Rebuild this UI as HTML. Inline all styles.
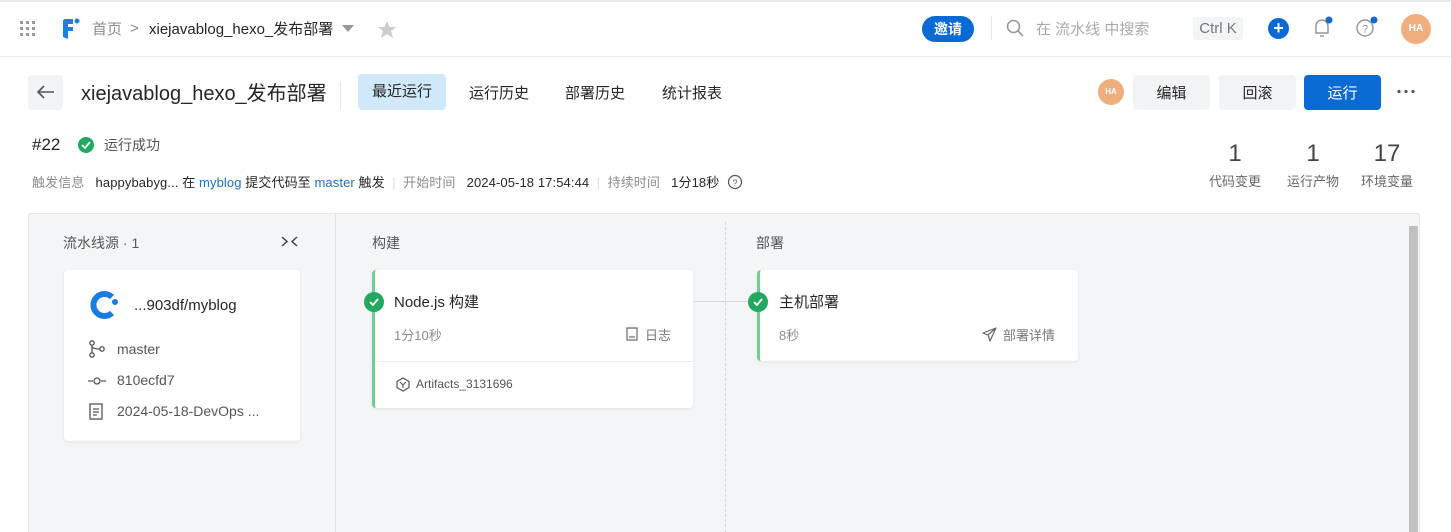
<!DOCTYPE html>
<html><head><meta charset="utf-8">
<style>
*{box-sizing:border-box;margin:0;padding:0}
html,body{width:1451px;height:532px;overflow:hidden}
body{background:#fff;font-family:"Liberation Sans","Noto Sans CJK SC",sans-serif;color:#262626;position:relative}
.a{position:absolute;white-space:nowrap}
.g{color:#8c8c8c}
.blue{color:#1b6fc6}
.btn{position:absolute;height:35px;border-radius:4px;background:#f2f3f5;font-size:15px;display:flex;align-items:center;justify-content:center;color:#262626}
.card{position:absolute;background:#fff;border-radius:4px;box-shadow:0 1px 3px rgba(0,0,0,.08)}
.chk{position:absolute;width:20px;height:20px;border-radius:50%;background:#22a860;display:flex;align-items:center;justify-content:center}
</style></head><body>
<div class="a" style="left:0;top:0;width:1451px;height:2px;background:#e8e8e8"></div>
<svg class="a" style="left:20px;top:21px" width="16" height="16"><g fill="#999"><rect x="0" y="0" width="3" height="3"/><rect x="6" y="0" width="3" height="3"/><rect x="12" y="0" width="3" height="3"/><rect x="0" y="6" width="3" height="3"/><rect x="6" y="6" width="3" height="3"/><rect x="12" y="6" width="3" height="3"/><rect x="0" y="12" width="3" height="3"/><rect x="6" y="12" width="3" height="3"/><rect x="12" y="12" width="3" height="3"/></g></svg>
<svg class="a" style="left:60px;top:17px" width="20" height="24"><path d="M3 4 Q3 2 6 2 H13 V7 H8 V10 H13 V14 H8 V22 L3 20 Z" fill="#1f7ee0"/><circle cx="17" cy="4" r="2.5" fill="#1f7ee0"/></svg>
<div class="a g" style="left:92px;top:18px;font-size:15px">首页</div>
<div class="a g" style="left:130px;top:20px;font-size:15px">&gt;</div>
<div class="a" style="left:149px;top:18px;font-size:15px">xiejavablog_hexo_发布部署</div>
<svg class="a" style="left:342px;top:25px" width="12" height="8"><path d="M0 0H12L6 7Z" fill="#999"/></svg>
<svg class="a" style="left:377px;top:20px" width="20" height="20"><path d="M10 1L12.6 7H19L14 11L16 18L10 14L4 18L6 11L1 7H7.4Z" fill="#ccc"/></svg>
<div class="a" style="left:922px;top:16px;width:52px;height:26px;border-radius:13px;background:#0a6ad4;color:#fff;font-size:14px;font-weight:bold;display:flex;align-items:center;justify-content:center">邀请</div>
<div class="a" style="left:991px;top:16px;width:1px;height:24px;background:#e5e5e5"></div>
<svg class="a" style="left:1006px;top:19px" width="18" height="18"><circle cx="7.5" cy="7.5" r="6" fill="none" stroke="#999" stroke-width="1.6"/><path d="M12 12L17 17" stroke="#999" stroke-width="1.6"/></svg>
<div class="a" style="left:1036px;top:18px;font-size:15px;color:#aaa">在 流水线 中搜索</div>
<div class="a" style="left:1193px;top:17px;width:50px;height:23px;background:#f3f4f6;border-radius:3px;font-size:15px;color:#777;text-align:center;line-height:24px">Ctrl K</div>
<div class="a" style="left:1268px;top:18px;width:21px;height:21px;border-radius:50%;background:#0a6ad4;color:#fff;font-size:18px;line-height:20px;text-align:center;font-weight:bold">+</div>
<svg class="a" style="left:1312px;top:16px" width="22" height="24"><path d="M4 17V10a6 6 0 0 1 12 0v7H3M8 20h4" fill="none" stroke="#999" stroke-width="1.5"/><circle cx="17" cy="4" r="3.5" fill="#0a6ad4"/></svg>
<svg class="a" style="left:1355px;top:16px" width="26" height="24"><circle cx="10" cy="12" r="8" fill="none" stroke="#999" stroke-width="1.5"/><text x="10" y="16.5" font-size="11" text-anchor="middle" fill="#999" font-family="Liberation Sans">?</text><circle cx="19" cy="4" r="3.5" fill="#0a6ad4"/></svg>
<div class="a" style="left:1401px;top:14px;width:30px;height:30px;border-radius:50%;background:#eeae7e;color:#fff;font-size:10px;font-weight:bold;text-align:center;line-height:30px">HA</div>
<div class="a" style="left:0;top:56px;width:1451px;height:1px;background:#ececec"></div>
<div class="a" style="left:28px;top:75px;width:35px;height:35px;background:#f2f3f5;border-radius:4px"></div>
<svg class="a" style="left:37px;top:85px" width="18" height="14"><path d="M17 7H2M7 1L1 7L7 13" fill="none" stroke="#555" stroke-width="1.6"/></svg>
<div class="a" style="left:81px;top:77px;font-size:20px">xiejavablog_hexo_发布部署</div>
<div class="a" style="left:340px;top:81px;width:1px;height:28px;background:#e5e5e5"></div>
<div class="a" style="left:358px;top:74px;width:88px;height:36px;background:#cfe8fc;border-radius:4px;font-size:15px;text-align:center;line-height:36px">最近运行</div>
<div class="a" style="left:469px;top:82px;font-size:15px">运行历史</div>
<div class="a" style="left:565px;top:82px;font-size:15px">部署历史</div>
<div class="a" style="left:662px;top:82px;font-size:15px">统计报表</div>
<div class="a" style="left:1098px;top:79px;width:26px;height:26px;border-radius:50%;background:#eeae7e;color:#fff;font-size:8px;font-weight:bold;text-align:center;line-height:26px">HA</div>
<div class="btn" style="left:1133px;top:75px;width:77px">编辑</div>
<div class="btn" style="left:1219px;top:75px;width:77px">回滚</div>
<div class="btn" style="left:1304px;top:75px;width:77px;background:#0a6ad4;color:#fff">运行</div>
<svg class="a" style="left:1397px;top:89px" width="18" height="5"><circle cx="2" cy="2.5" r="1.6" fill="#555"/><circle cx="9" cy="2.5" r="1.6" fill="#555"/><circle cx="16" cy="2.5" r="1.6" fill="#555"/></svg>
<div class="a" style="left:32px;top:135px;font-size:17px">#22</div>
<div class="chk" style="left:78px;top:137px;width:16px;height:16px"><svg width="10" height="8"><path d="M1 4L4 7L9 1" fill="none" stroke="#fff" stroke-width="1.8"/></svg></div>
<div class="a" style="left:104px;top:135px;font-size:14px;color:#555">运行成功</div>
<div class="a" style="left:32px;top:172px;font-size:13px;letter-spacing:0.1px"><span class="g">触发信息</span>&nbsp;&nbsp; happybabyg... 在 <span class="blue">myblog</span> 提交代码至 <span class="blue">master</span> 触发 <span style="color:#ddd">&nbsp;|&nbsp;</span> <span class="g">开始时间</span>&nbsp;&nbsp; 2024-05-18 17:54:44 <span style="color:#ddd">&nbsp;|&nbsp;</span> <span class="g">持续时间</span>&nbsp;&nbsp; 1分18秒</div>
<svg class="a" style="left:727px;top:174px" width="16" height="16"><circle cx="8" cy="8" r="6.5" fill="none" stroke="#555" stroke-width="1.2"/><text x="8" y="12" font-size="9" text-anchor="middle" fill="#555" font-family="Liberation Sans">?</text></svg>
<div class="a" style="left:1210px;top:140px;width:50px;text-align:center;font-size:24px;color:#444">1</div>
<div class="a" style="left:1203px;top:171px;width:64px;text-align:center;font-size:13px;color:#666">代码变更</div>
<div class="a" style="left:1288px;top:140px;width:50px;text-align:center;font-size:24px;color:#444">1</div>
<div class="a" style="left:1281px;top:171px;width:64px;text-align:center;font-size:13px;color:#666">运行产物</div>
<div class="a" style="left:1362px;top:140px;width:50px;text-align:center;font-size:24px;color:#444">17</div>
<div class="a" style="left:1355px;top:171px;width:64px;text-align:center;font-size:13px;color:#666">环境变量</div>
<div class="a" style="left:28px;top:213px;width:1392px;height:330px;background:#f3f5f7;border:1px solid #e6e8eb;border-radius:3px"></div>
<div class="a" style="left:335px;top:214px;width:1px;height:318px;background:#e0e0e0"></div>
<div class="a" style="left:725px;top:222px;width:0;height:310px;border-left:1px dashed #d6d6d6"></div>
<div class="a" style="left:1409px;top:226px;width:9px;height:306px;background:#c1c1c1"></div>
<div class="a" style="left:63px;top:233px;font-size:14px;color:#555">流水线源 · 1</div>
<svg class="a" style="left:281px;top:236px" width="17" height="11"><path d="M1 1L6 5.5L1 10M16 1L11 5.5L16 10" fill="none" stroke="#444" stroke-width="1.5"/></svg>
<div class="a" style="left:372px;top:233px;font-size:14px;color:#555">构建</div>
<div class="a" style="left:756px;top:233px;font-size:14px;color:#555">部署</div>
<div class="card" style="left:64px;top:270px;width:236px;height:171px"></div>
<svg class="a" style="left:90px;top:290px" width="30" height="30"><path d="M22 7A11 11 0 1 0 22 23" fill="none" stroke="#1a7be0" stroke-width="6"/><circle cx="25" cy="12" r="3" fill="#1a7be0"/></svg>
<div class="a" style="left:134px;top:297px;font-size:15px">...903df/myblog</div>
<svg class="a" style="left:89px;top:340px" width="16" height="18"><circle cx="3" cy="3" r="2.2" fill="none" stroke="#555" stroke-width="1.3"/><circle cx="3" cy="15" r="2.2" fill="none" stroke="#555" stroke-width="1.3"/><circle cx="13" cy="9" r="2.2" fill="none" stroke="#555" stroke-width="1.3"/><path d="M3 5V13M3 6Q3 9 11 9" fill="none" stroke="#555" stroke-width="1.3"/></svg>
<div class="a" style="left:117px;top:341px;font-size:14px;color:#555">master</div>
<svg class="a" style="left:88px;top:376px" width="18" height="10"><path d="M0 5H5M13 5H18" stroke="#555" stroke-width="1.3"/><circle cx="9" cy="5" r="3" fill="none" stroke="#555" stroke-width="1.3"/></svg>
<div class="a" style="left:117px;top:372px;font-size:14px;color:#555">810ecfd7</div>
<svg class="a" style="left:89px;top:403px" width="14" height="17"><rect x="1" y="1" width="12" height="15" fill="none" stroke="#555" stroke-width="1.3"/><path d="M4 6H10M4 9H10M4 12H8" stroke="#555" stroke-width="1.2"/></svg>
<div class="a" style="left:117px;top:403px;font-size:14px;color:#555">2024-05-18-DevOps ...</div>
<div class="card" style="left:372px;top:270px;width:321px;height:138px;border-left:3px solid #6fcf8e"></div>
<div class="a" style="left:375px;top:361px;width:318px;height:1px;background:#ececec"></div>
<div class="chk" style="left:364px;top:292px"><svg width="10" height="8"><path d="M1 4L4 7L9 1" fill="none" stroke="#fff" stroke-width="1.8"/></svg></div>
<div class="a" style="left:394px;top:291px;font-size:15px">Node.js 构建</div>
<div class="a g" style="left:394px;top:325px;font-size:13px">1分10秒</div>
<svg class="a" style="left:626px;top:327px" width="12" height="14"><rect x="1" y="1" width="10" height="12" fill="none" stroke="#666" stroke-width="1.2"/><path d="M3 10H9" stroke="#666" stroke-width="1.2"/></svg>
<div class="a" style="left:645px;top:325px;font-size:13px;color:#777">日志</div>
<svg class="a" style="left:396px;top:377px" width="14" height="15"><path d="M7 1L13 4.5V10.5L7 14L1 10.5V4.5Z" fill="none" stroke="#555" stroke-width="1.2"/><path d="M4 5L7 8L10 5M7 8V11" fill="none" stroke="#555" stroke-width="1.1"/></svg>
<div class="a" style="left:416px;top:377px;font-size:12px;color:#555">Artifacts_3131696</div>
<div class="a" style="left:694px;top:301px;width:62px;height:1px;background:#d6d6d6"></div>
<div class="card" style="left:757px;top:270px;width:321px;height:91px;border-left:3px solid #6fcf8e"></div>
<div class="chk" style="left:748px;top:292px"><svg width="10" height="8"><path d="M1 4L4 7L9 1" fill="none" stroke="#fff" stroke-width="1.8"/></svg></div>
<div class="a" style="left:779px;top:291px;font-size:15px">主机部署</div>
<div class="a g" style="left:779px;top:325px;font-size:13px">8秒</div>
<svg class="a" style="left:982px;top:327px" width="15" height="15"><path d="M14 1L1 6L6 8L8 14Z M6 8L14 1" fill="none" stroke="#666" stroke-width="1.2" stroke-linejoin="round"/></svg>
<div class="a" style="left:1003px;top:325px;font-size:13px;color:#777">部署详情</div>
</body></html>
